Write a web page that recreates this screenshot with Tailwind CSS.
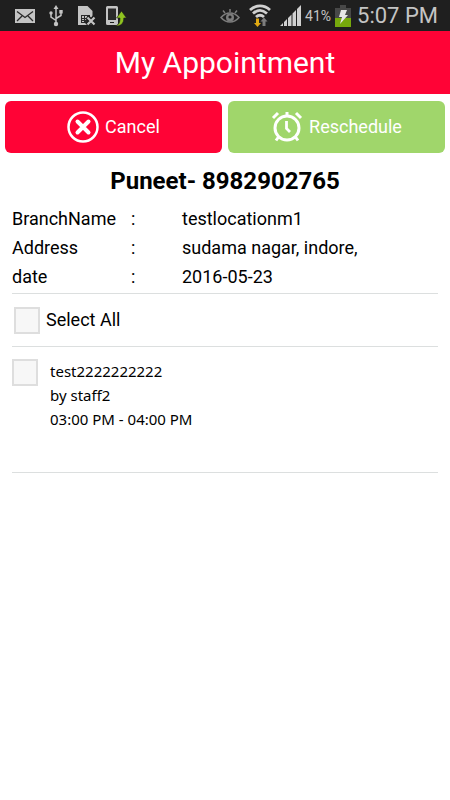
<!DOCTYPE html>
<html lang="en">
<head>
  <meta charset="UTF-8" />
  <meta name="viewport" content="width=device-width, initial-scale=1.0"/>
  <title>My Appointment</title>
  <script src="https://cdn.jsdelivr.net/npm/@tailwindcss/browser@4"></script>
</head>
<body class="bg-white min-h-screen text-black font-['Roboto',sans-serif]">
  <!-- status bar -->
  <div class="h-[31px] bg-[#1f1f1f] flex items-center justify-between pl-[15px] pr-3 text-[#c4c4c4]">
    <div class="flex items-center">
      <svg class="w-5 h-[14px] mr-[14px]" viewBox="0 0 20 14">
        <rect width="20" height="14" fill="#c4c4c4"/>
        <path d="M2 2.500l8 6 8-6M2 12l5-5M18 12l-5-5" fill="none" stroke="#2a2a2a" stroke-width="1.300"/>
      </svg>
      <svg class="w-[14px] h-[22px] mr-[14px]" viewBox="0 0 14 22" fill="none" stroke="#c4c4c4" stroke-width="1.500">
        <path d="M7 3v15M7 15.500l-5-3.500V8M7 13.500l5-3V7"/>
        <path d="M7 0l2.500 4h-5z" fill="#c4c4c4" stroke="none"/>
        <circle cx="7" cy="19" r="2.200" fill="#c4c4c4" stroke="none"/>
        <circle cx="2" cy="8" r="1.700" fill="#c4c4c4" stroke="none"/>
        <path d="M10.300 5h3.400v3.400h-3.400z" fill="#c4c4c4" stroke="none"/>
      </svg>
      <svg class="w-5 h-[22px] mr-2" viewBox="0 0 20 22">
        <path d="M1 1h9.500l5 5v14H1z" fill="#c4c4c4"/>
        <path d="M4 10h9v8H4z" fill="#2a2a2a"/>
        <path d="M5 11h2v2H5zM8 11h2v2H8zM5 14h2v1H5zM8 14h2v1H8zM5 16h2v1H5zM11 11h1v2h-1z" fill="#c4c4c4"/>
        <path d="M10 12l8 8M18 12l-8 8" stroke="#1f1f1f" stroke-width="5"/>
        <path d="M10.500 12.500l7 7M17.500 12.500l-7 7" stroke="#c4c4c4" stroke-width="2.200"/>
      </svg>
      <svg class="w-[22px] h-[22px]" viewBox="0 0 22 22">
        <path d="M2.500 1h9A1.500 1.500 0 0 1 13 2.500v16a1.500 1.500 0 0 1-1.500 1.500h-9A1.500 1.500 0 0 1 1 18.500v-16A1.500 1.500 0 0 1 2.500 1z" fill="#c4c4c4"/>
        <path d="M3 3.500h8V15H3z" fill="#2a2a2a"/>
        <path d="M5 17.500h4" stroke="#1f1f1f"/>
        <path d="M10 21c4-1 5-3.500 5-8h-3.500L16.500 6l5 7h-2.700c0 5.500-3 8.500-8.800 8z" fill="#8fc31f" stroke="#1f1f1f" stroke-width=".6"/>
      </svg>
    </div>
    <div class="flex items-center">
      <svg class="w-5 h-4 mr-[9px]" viewBox="0 0 20 16" fill="none" stroke="#7d7d7d" stroke-width="1.500">
        <path d="M1 9.500c5-6 13-6 18 0-5 6-13 6-18 0z"/>
        <circle cx="10" cy="9.500" r="4" fill="#7d7d7d" stroke="none"/>
        <circle cx="10" cy="9" r="1.600" fill="#1f1f1f" stroke="none"/>
        <path d="M10 4V1M5 5L3 2.500M15 5l2-2.500"/>
      </svg>
      <svg class="w-[22px] h-6 mr-[9px]" viewBox="0 0 22 24">
        <g fill="none" stroke="#d0d0d0" stroke-width="2.800">
          <path d="M1 6c6-5.500 14-5.500 20 0"/>
          <path d="M4 9.500c4.500-4 9.500-4 14 0"/>
          <path d="M7 13c2.500-2.300 5.500-2.300 8 0"/>
        </g>
        <path d="M7 14.500h3V19h2l-3.500 4L5 19h2z" fill="#e0a912"/>
        <path d="M13.500 22h3v-4.500h2L15 13.500l-3.500 4h2z" fill="#7d7d7d"/>
      </svg>
      <svg class="w-[21px] h-[22px] mr-1" viewBox="0 0 21 22" fill="#d0d0d0">
        <path d="M0 21l3-3v3zM4 17l3-3v7H4zM8 13l3.500-3.500V21H8zM12.500 8.500L16 5v16h-3.500zM17 4l4-4v21h-4z"/>
      </svg>
      <span class="text-sm mr-1">41%</span>
      <svg class="w-4 h-[22px] mr-[6px]" viewBox="0 0 16 22">
        <path d="M5 0h6v3h5v19H0V3h5z" fill="#484848"/>
        <path d="M0 13h16v9H0z" fill="#76a80c"/>
        <path d="M6 5h6l-2 5h3L5 19l2-7H4z" fill="#e6e6e6"/>
      </svg>
      <span class="text-[22px] leading-none">5:07 PM</span>
    </div>
  </div>

  <header class="h-[63px] bg-[#ff0336] flex items-center justify-center">
    <h1 class="text-white text-3xl">My Appointment</h1>
  </header>

  <div class="flex gap-[6px] pt-[7px] px-[5px]">
    <button class="flex-1 h-[52px] flex items-center justify-center gap-[6px] rounded-md bg-[#ff0336] text-white text-lg">
      <svg class="w-8 h-8" viewBox="0 0 32 32" fill="none" stroke="#fff">
        <circle cx="16" cy="16" r="14.500" stroke-width="2.500"/>
        <path d="M10.500 10.500l11 11M21.500 10.500l-11 11" stroke-width="4" stroke-linecap="round"/>
      </svg>
      Cancel
    </button>
    <button class="flex-1 h-[52px] flex items-center justify-center gap-[6px] rounded-md bg-[#a0d66b] text-white text-lg">
      <svg class="w-8 h-8" viewBox="0 0 32 32" fill="none" stroke="#fff">
        <circle cx="16" cy="17" r="12" stroke-width="3"/>
        <path d="M16 1v4" stroke-width="3"/>
        <path d="M2 7l5-5M30 7l-5-5M7.500 26L5 29.500M24.500 26l2.500 3.500" stroke-width="3"/>
        <path d="M15.500 10v7.500l3.500 3.500" stroke-width="2.800"/>
      </svg>
      Reschedule
    </button>
  </div>

  <main class="px-3">
    <h2 class="mt-3 text-center text-2xl font-bold">Puneet- 8982902765</h2>

    <table class="w-full mt-[7px] text-lg leading-[29px]">
      <tbody>
        <tr>
          <th scope="row" class="w-[119px] p-0 text-left font-normal">BranchName</th>
          <td class="w-[51px] p-0">:</td>
          <td class="p-0">testlocationm1</td>
        </tr>
        <tr>
          <th scope="row" class="p-0 text-left font-normal">Address</th>
          <td class="p-0">:</td>
          <td class="p-0">sudama nagar, indore,</td>
        </tr>
        <tr>
          <th scope="row" class="p-0 text-left font-normal">date</th>
          <td class="p-0">:</td>
          <td class="p-0">2016-05-23</td>
        </tr>
      </tbody>
    </table>

    <div class="mt-[2px] h-[54px] flex items-center gap-[6px] border-y border-[#dcdfdf] pl-[2px]">
      <input type="checkbox" id="selectAll" class="appearance-none w-[26px] h-[27px] border-2 border-[#dedede] bg-[#f7f7f7] checked:bg-[#a0d66b]"/>
      <label for="selectAll" class="text-lg">Select All</label>
    </div>

    <div class="h-[126px] flex items-start gap-3 border-b border-[#dcdfdf] pt-3">
      <input type="checkbox" id="slot1" class="slot appearance-none w-[26px] h-[27px] border-2 border-[#dedede] bg-[#f7f7f7] checked:bg-[#a0d66b]"/>
      <label for="slot1" class="font-['Noto_Sans',sans-serif] text-[15px] leading-6">
        test2222222222<br/>
        by staff2<br/>
        03:00 PM - 04:00 PM
      </label>
    </div>
  </main>

  <script>
    const selectAll = document.getElementById("selectAll");
    selectAll.addEventListener("change", () => {
      document.querySelectorAll(".slot").forEach(box => {
        box.checked = selectAll.checked;
      });
    });
  </script>
</body>
</html>
